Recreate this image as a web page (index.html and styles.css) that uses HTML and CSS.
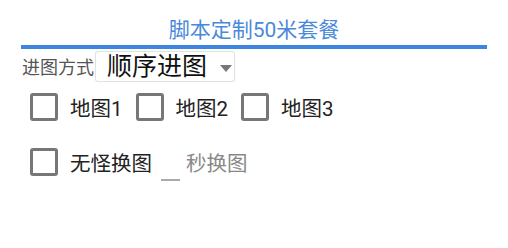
FILE: index.html
```html
<html>
<head>
<meta charset="utf-8">
<link rel="stylesheet" href="styles.css">
</head>
<body>
<div class="panel">
    <div class="title">脚本定制50米套餐</div>

    <div class="row mode-row">
        <span class="label">进图方式</span>
        <span class="select-wrap">
            <select class="mode-select">
                <option>顺序进图</option>
                <option>随机进图</option>
            </select>
        </span>
    </div>

    <div class="row check-row">
        <label class="check"><input type="checkbox"><span>地图1</span></label>
        <label class="check"><input type="checkbox"><span>地图2</span></label>
        <label class="check"><input type="checkbox"><span>地图3</span></label>
    </div>

    <div class="row check-row last">
        <label class="check"><input type="checkbox"><span>无怪换图</span></label>
        <input class="sec-input" type="text">
        <span class="hint">秒换图</span>
    </div>
</div>
</body>
</html>
```

FILE: styles.css
```css
/* page */
body {
  margin: 0;
  font-family: Roboto, "Noto Sans CJK SC", sans-serif;
  background: #fff;
  color: #222;
}

.panel {
  margin-left: 21px;
  width: 466px;
}

/* header with blue rule */
.title {
  height: 45px;
  line-height: 60px;
  font-size: 21px;
  text-align: center;
  color: #4a89d9;
  border-bottom: 4px solid #3d85df;
  box-sizing: content-box;
  overflow: hidden;
}

.row {
  display: flex;
  align-items: center;
}

.mode-row {
  margin-top: 2px;
  height: 30px;
}

.label {
  font-size: 18px;
  color: #555;
  margin-left: 1px;
  margin-right: 1px;
}

.select-wrap {
  position: relative;
  display: inline-block;
}

.mode-select {
  -webkit-appearance: none;
  appearance: none;
  width: 140px;
  height: 31px;
  padding: 0 0 0 11px;
  margin: 0;
  font-family: Roboto, "Noto Sans CJK SC", sans-serif;
  font-size: 25px;
  color: #111;
  background: #fff;
  border: 1px solid #e2e2e2;
  border-radius: 3px;
  box-shadow: 0 0 1px rgba(0, 0, 0, 0.08);
  outline: none;
}

/* the dropdown arrow */
.select-wrap::after {
  content: "";
  position: absolute;
  right: 3px;
  top: 14px;
  border-left: 6px solid transparent;
  border-right: 6px solid transparent;
  border-top: 7px solid #777;
  pointer-events: none;
}

.check-row {
  padding-left: 9px;
  height: 28px;
  margin-top: 12px;
}

.check-row.last {
  margin-top: 27px;
}

.check {
  display: flex;
  align-items: center;
  margin-right: 13px;
  font-size: 20.5px;
  color: #222;
}

.check input {
  -webkit-appearance: none;
  appearance: none;
  width: 28px;
  height: 28px;
  margin: 0 12px 0 0;
  border: 3px solid #777;
  border-radius: 3px;
  background: #fff;
}

.last .check {
  margin-right: 9px;
}

.sec-input {
  width: 19px;
  height: 38px;
  padding: 0;
  margin: -5px 6px 0 0;
  border: none;
  border-bottom: 2px solid #aaa;
  align-self: flex-start;
  outline: none;
  box-sizing: border-box;
  background: transparent;
}

.hint {
  font-size: 20.5px;
  color: #888;
}
```
